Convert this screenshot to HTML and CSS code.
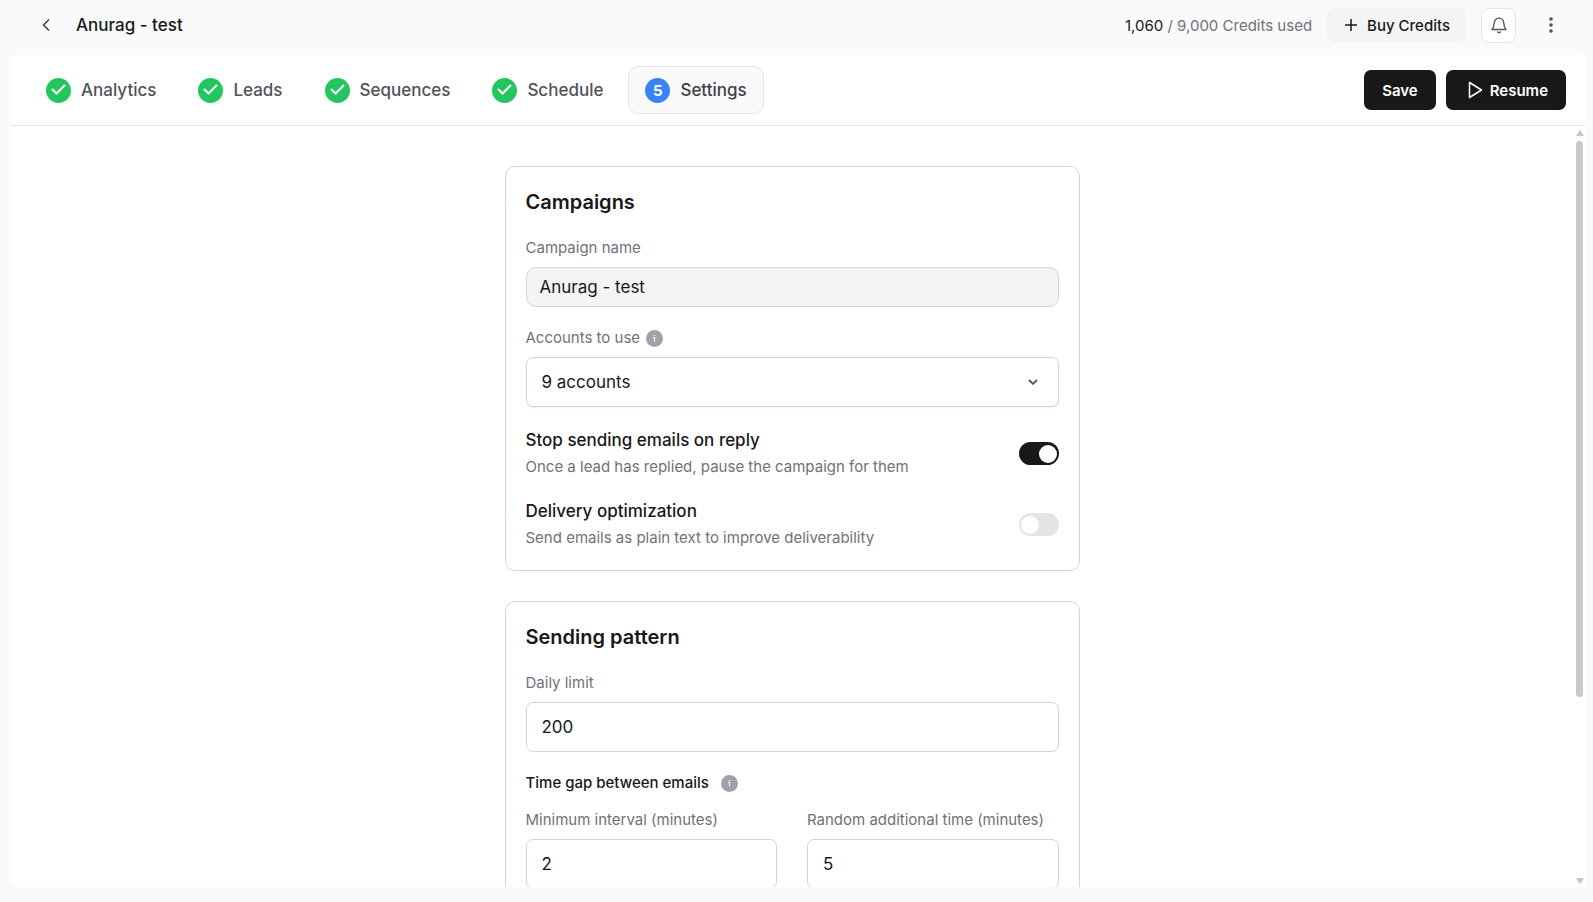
FILE: index.html
```html
<!DOCTYPE html>
<html lang="en">
<head>
    <meta charset="UTF-8">
    <meta name="viewport" content="width=device-width, initial-scale=1.0">
    <title>Anurag - test</title>
    <link rel="stylesheet" href="styles.css">
</head>
<body>
    <header class="topbar">
        <button class="icon-btn" type="button" aria-label="Back">
            <svg width="8" height="14" viewBox="0 0 8 14" fill="none" stroke="currentColor" stroke-width="1.5"><path d="M7 1.5 1.5 7 7 12.500"/></svg>
        </button>
        <h1 class="page-title">Anurag - test</h1>
        <div class="topbar-right">
            <p class="credits"><span class="credits-used">1,060</span> / 9,000 Credits used</p>
            <button class="buy-btn" type="button">
                <svg width="12" height="12" viewBox="0 0 12 12" stroke="currentColor" stroke-width="1.5"><path d="M6 0v12M0 6h12"/></svg>
                Buy Credits
            </button>
            <button class="bell-btn" type="button" aria-label="Notifications">
                <svg width="18" height="18" viewBox="0 0 18 18" fill="none" stroke="currentColor" stroke-width="1.4" stroke-linejoin="round" stroke-linecap="round"><path d="M2 13.500h14c-1.400-1.500-2-3.200-2.300-6.700a4.700 4.700 0 0 0-9.400 0C4 10.300 3.400 12 2 13.500z"/><path d="M7.500 15.900c.8.900 2.200.9 3 0"/></svg>
            </button>
            <button class="icon-btn more-btn" type="button" aria-label="More">
                <svg width="4" height="16" viewBox="0 0 4 16" fill="currentColor"><circle cx="2" cy="2" r="1.800"/><circle cx="2" cy="8" r="1.800"/><circle cx="2" cy="14" r="1.800"/></svg>
            </button>
        </div>
    </header>

    <main class="panel">
        <div class="panel-header">
            <nav class="steps">
                <a class="step" href="#analytics">
                    <span class="step-badge"><svg width="15" height="12" viewBox="0 0 15 12" fill="none" stroke="currentColor" stroke-width="2"><path d="M1 5 5.500 9.500 14 1"/></svg></span>
                    Analytics
                </a>
                <a class="step" href="#leads">
                    <span class="step-badge"><svg width="15" height="12" viewBox="0 0 15 12" fill="none" stroke="currentColor" stroke-width="2"><path d="M1 5 5.500 9.500 14 1"/></svg></span>
                    Leads
                </a>
                <a class="step" href="#sequences">
                    <span class="step-badge"><svg width="15" height="12" viewBox="0 0 15 12" fill="none" stroke="currentColor" stroke-width="2"><path d="M1 5 5.500 9.500 14 1"/></svg></span>
                    Sequences
                </a>
                <a class="step" href="#schedule">
                    <span class="step-badge"><svg width="15" height="12" viewBox="0 0 15 12" fill="none" stroke="currentColor" stroke-width="2"><path d="M1 5 5.500 9.500 14 1"/></svg></span>
                    Schedule
                </a>
                <a class="step active" href="#settings">
                    <span class="step-badge">5</span>
                    Settings
                </a>
            </nav>
            <div class="actions">
                <button class="btn" type="button">Save</button>
                <button class="btn btn-resume" type="button">
                    <svg width="15" height="18" viewBox="0 0 15 18" fill="none" stroke="currentColor" stroke-width="1.500" stroke-linejoin="round"><path d="M1.500 1.500v15L13.500 9z"/></svg>
                    Resume
                </button>
            </div>
        </div>

        <div class="panel-body">
            <div class="content">
                <section class="card">
                    <h2 class="card-title">Campaigns</h2>
                    <div class="field">
                        <label class="label" for="name">Campaign name</label>
                        <input class="input input-filled" id="name" type="text" value="Anurag - test">
                    </div>
                    <div class="field">
                        <div class="label-row">
                            <label class="label" for="accounts">Accounts to use</label>
                            <svg class="info" viewBox="0 0 17 17"><circle cx="8.500" cy="8.500" r="8.500" fill="#a1a1aa"/><path d="M7 7.500h1.500v4M7.800 5.500h1.400" stroke="#f4f4f5" stroke-width="1.200" fill="none"/></svg>
                        </div>
                        <div class="select-wrap">
                            <select class="input select" id="accounts">
                                <option>9 accounts</option>
                            </select>
                            <svg class="chevron" viewBox="0 0 10 6" fill="none" stroke="currentColor" stroke-width="1.800"><path d="M1 1l4 3.800L9 1"/></svg>
                        </div>
                    </div>
                    <div class="toggle-row">
                        <div>
                            <label class="toggle-title" for="stop">Stop sending emails on reply</label>
                            <p class="toggle-desc">Once a lead has replied, pause the campaign for them</p>
                        </div>
                        <input class="switch" id="stop" type="checkbox" checked>
                    </div>
                    <div class="toggle-row">
                        <div>
                            <label class="toggle-title" for="delivery">Delivery optimization</label>
                            <p class="toggle-desc">Send emails as plain text to improve deliverability</p>
                        </div>
                        <input class="switch" id="delivery" type="checkbox">
                    </div>
                </section>

                <section class="card">
                    <h2 class="card-title">Sending pattern</h2>
                    <div class="field">
                        <label class="label" for="limit">Daily limit</label>
                        <input class="input" id="limit" type="text" value="200">
                    </div>
                    <div class="gap-heading">
                        <h3 class="gap-title">Time gap between emails</h3>
                        <svg class="info" viewBox="0 0 17 17"><circle cx="8.500" cy="8.500" r="8.500" fill="#a1a1aa"/><path d="M7 7.500h1.500v4M7.800 5.500h1.400" stroke="#f4f4f5" stroke-width="1.200" fill="none"/></svg>
                    </div>
                    <div class="field-pair">
                        <div class="field">
                            <label class="label" for="min">Minimum interval (minutes)</label>
                            <input class="input" id="min" type="text" value="2">
                        </div>
                        <div class="field">
                            <label class="label" for="random">Random additional time (minutes)</label>
                            <input class="input" id="random" type="text" value="5">
                        </div>
                    </div>
                </section>
            </div>
            <div class="scrollbar" aria-hidden="true">
                <svg width="8" height="6" viewBox="0 0 8 6" fill="currentColor"><path d="M3.200.5h1.600L8 6H0z"/></svg>
                <div class="track"><div class="thumb"></div></div>
                <svg width="8" height="6" viewBox="0 0 8 6" fill="currentColor"><path d="M0 0h8L4.800 5.500H3.200z"/></svg>
            </div>
        </div>
    </main>
</body>
</html>
```
FILE: styles.css
```css
* {
    box-sizing: border-box;
}
body, h1, h2, h3, p {
    margin: 0;
}
body {
    display: flex;
    flex-direction: column;
    height: 100vh;
    padding: 0 7px 15px 11px;
    overflow: hidden;
    background-color: #fafafa;
    color: #18181b;
    font-family: Inter, "Liberation Sans", sans-serif;
    font-size: 17px;
}
button, input, select {
    font: inherit;
    color: inherit;
}
button {
    cursor: pointer;
}
svg {
    display: block;
    flex-shrink: 0;
}

/* top bar */
.topbar {
    display: flex;
    align-items: center;
    flex-shrink: 0;
    height: 55px;
    padding: 0 20px 5px 20px;
}
.icon-btn {
    display: flex;
    align-items: center;
    justify-content: center;
    width: 30px;
    height: 30px;
    padding: 0;
    border: none;
    background: none;
    color: #3f3f46;
}
.more-btn {
    margin-left: 5px;
    color: #52525b;
}
.page-title {
    margin-left: 15px;
    font-size: 17px;
    font-weight: 500;
}
.topbar-right {
    display: flex;
    align-items: center;
    gap: 15px;
    margin-left: auto;
}
.credits {
    color: #71717a;
    font-size: 15px;
}
.credits-used {
    color: #18181b;
}
.buy-btn {
    display: flex;
    align-items: center;
    gap: 10px;
    height: 35px;
    padding: 0 16px 0 18px;
    border: none;
    border-radius: 8px;
    background-color: #f4f4f5;
    font-size: 15px;
    font-weight: 500;
}
.bell-btn {
    display: flex;
    align-items: center;
    justify-content: center;
    width: 35px;
    height: 35px;
    padding: 0;
    border: 1px solid #e4e4e7;
    border-radius: 8px;
    background-color: white;
    color: #52525b;
}

/* panel */
.panel {
    display: flex;
    flex-direction: column;
    flex: 1;
    min-height: 0;
    overflow: hidden;
    border-radius: 5px;
    background-color: white;
}
.panel-header {
    display: flex;
    align-items: center;
    justify-content: space-between;
    flex-shrink: 0;
    height: 71px;
    padding: 0 20px 0 18px;
    border-bottom: 1px solid #e4e4e7;
}
.steps {
    display: flex;
    gap: 8px;
}
.step {
    display: flex;
    align-items: center;
    gap: 10px;
    height: 48px;
    padding: 0 16px;
    border: 1px solid transparent;
    border-radius: 10px;
    color: #52525b;
    font-weight: 500;
    text-decoration: none;
}
.step-badge {
    display: flex;
    align-items: center;
    justify-content: center;
    width: 25px;
    height: 25px;
    border-radius: 50%;
    background-color: #22c55e;
    color: white;
    font-size: 15px;
    font-weight: 700;
}
.step.active {
    border-color: #e4e4e7;
    background-color: #fafafa;
    color: #3f3f46;
}
.step.active .step-badge {
    background-color: #3b82f6;
}
.actions {
    display: flex;
    gap: 10px;
}
.btn {
    display: flex;
    align-items: center;
    height: 40px;
    padding: 0 18px;
    border: none;
    border-radius: 7px;
    background-color: #18181b;
    color: white;
    font-size: 15px;
    font-weight: 600;
}
.btn-resume {
    gap: 7px;
    padding-left: 22px;
}

/* scrolling area */
.panel-body {
    display: flex;
    flex: 1;
    min-height: 0;
}
.content {
    display: flex;
    flex-direction: column;
    align-items: center;
    gap: 30px;
    flex: 1;
    padding: 40px 20px;
    overflow: hidden;
}
.scrollbar {
    display: flex;
    flex-direction: column;
    align-items: center;
    gap: 5px;
    width: 13px;
    padding: 4px 0 3px;
    color: #c9c9c9;
}
.track {
    flex: 1;
}
.thumb {
    width: 7px;
    height: 76%;
    border-radius: 4px;
    background-color: #c9c9c9;
}

/* cards */
.card {
    flex-shrink: 0;
    width: 100%;
    max-width: 575px;
    padding: 20px 20px 21px;
    border: 1px solid #d4d4d8;
    border-radius: 10px;
}
.card-title {
    font-size: 20px;
    font-weight: 600;
    line-height: 30px;
}
.field {
    margin-top: 20px;
}
.label-row {
    display: flex;
    align-items: center;
    gap: 6px;
}
.label {
    display: block;
    color: #71717a;
    font-size: 15px;
    line-height: 22px;
}
.info {
    width: 17px;
    height: 17px;
}
.input {
    display: block;
    width: 100%;
    height: 50px;
    margin-top: 8px;
    padding: 0 15px;
    border: 1px solid #d4d4d8;
    border-radius: 7px;
    background-color: white;
}
.input-filled {
    height: 40px;
    padding: 0 13px;
    border-radius: 10px;
    background-color: #f4f4f5;
}
.select-wrap {
    position: relative;
}
.select {
    appearance: none;
    box-shadow: 0 1px 2px rgba(0, 0, 0, 0.05);
}
.chevron {
    position: absolute;
    top: 22px;
    right: 21px;
    width: 10px;
    height: 6px;
    color: #52525b;
    pointer-events: none;
}
.toggle-row {
    display: flex;
    align-items: center;
    justify-content: space-between;
    margin-top: 20px;
}
.toggle-title {
    display: block;
    font-weight: 500;
    line-height: 26px;
}
.toggle-desc {
    margin-top: 3px;
    color: #71717a;
    font-size: 15px;
    line-height: 22px;
}
.switch {
    appearance: none;
    display: flex;
    align-items: center;
    width: 40px;
    height: 23px;
    margin: 2px 0 0;
    padding: 0 2px;
    border-radius: 12px;
    background-color: #e4e4e7;
    cursor: pointer;
}
.switch::before {
    content: "";
    width: 18px;
    height: 18px;
    border-radius: 50%;
    background-color: white;
}
.switch:checked {
    justify-content: flex-end;
    background-color: #18181b;
}
.gap-heading {
    display: flex;
    align-items: center;
    gap: 12px;
    margin-top: 20px;
}
.gap-title {
    font-size: 15px;
    font-weight: 500;
    line-height: 22px;
}
.field-pair {
    display: grid;
    grid-template-columns: 1fr 1fr;
    gap: 30px;
}
.field-pair .field {
    margin-top: 15px;
}
```
